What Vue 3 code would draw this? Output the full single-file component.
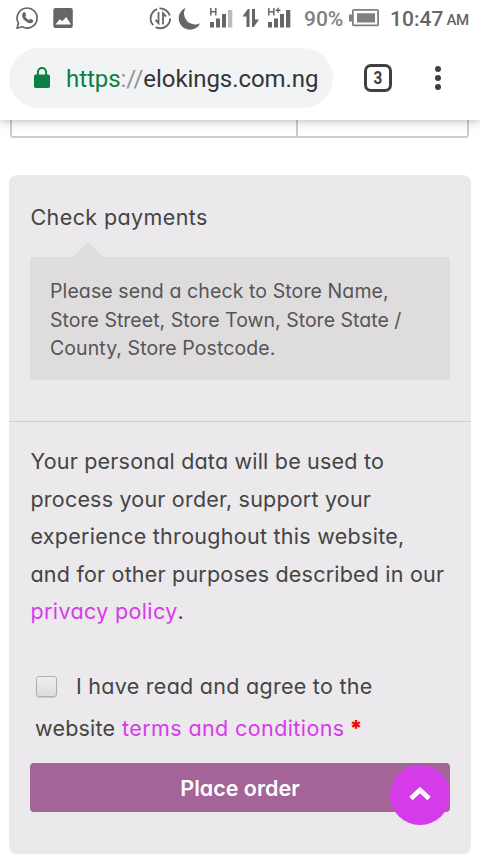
<script setup>
const notice = ['Please send a check to Store Name,', 'Store Street, Store Town, Store State /', 'County, Store Postcode.']
const privacy = ['Your personal data will be used to', 'process your order, support your', 'experience throughout this website,', 'and for other purposes described in our']
</script>

<template>
  <div class="screen">
    <header class="chrome">
      <div class="status">
        <svg class="status-icons" width="300" height="36" viewBox="0 0 300 36">
          <g fill="none" stroke="#666" stroke-width="1.7">
            <path d="M17 28.2l1.5-5.1a10 10 0 1 1 3.8 3.7z" stroke-linejoin="round" />
            <path d="M153.2 25.2a10 10 0 0 1 4-16.1M159.5 8.4a10 10 0 0 1 10.3 7.2M170.2 18.5a10 10 0 0 1-14.6 8.6" stroke-width="1.9" />
            <path d="M158.5 12v11.2l-3-3.4M163 24.5V13.2l3 3.5" stroke-width="1.8" />
          </g>
          <path d="M23.4 12.4c.7-.5 1.5-.3 1.8.4l.9 2c.2.5-.8 1.5-.8 1.8.6 1.5 2 2.8 3.8 3.5.5 0 1.1-1.4 1.6-1.3l2.2 1.1c.5.3.3 1.7-.2 2.3-2 2-5.3.8-7.800-1.600-2.500-2.300-4-6-1.500-8.200z" fill="#666" />
          <rect x="53.300" y="8" width="19.500" height="20" rx="2" fill="#666" />
          <path d="M55.500 24.500l4.300-5.200 2.400 2 4-4.300 4.800 7.500z" fill="#fff" />
          <path d="M185.500 8a11 11 0 0 0 14.700 15.200A11.300 11.300 0 1 1 185.500 8z" fill="#666" />
          <g fill="#666">
            <path d="M210 22h4v5.500h-4zM216 18.500h4v9h-4zM222 14h4v13.500h-4z" />
            <path d="M228 10h4.300v17.500H228z" fill="#bbb" />
            <path d="M268 22h4v5.500h-4zM274 18.500h4v9h-4zM280 14h4v13.500h-4zM286 10h4.300v17.500H286z" />
            <path d="M242.500 16.500l5.300-7.500h1.700v18h-3V16.500zM252 9h3v10.500h4l-5.200 7.500H252z" />
          </g>
          <path d="M210.800 8v7.500M215.800 8v7.500M210.800 11.700h5M268.800 8v7.500M273.800 8v7.500M268.800 11.700h5M275.500 10.200h5M278 7.700v5" stroke="#666" stroke-width="1.500" fill="none" />
        </svg>
        <span class="percent">90%</span>
        <svg class="battery" width="31" height="18" viewBox="0 0 31 18">
          <rect x="3.900" y=".9" width="25.200" height="15.500" rx="1" fill="none" stroke="#808080" stroke-width="1.800" />
          <path d="M0 5.500h3v7H0zM8 4.200h18v9.200H8z" fill="#808080" />
        </svg>
        <span class="time">10:47</span><span class="am">AM</span>
      </div>
      <div class="toolbar">
        <div class="address">
          <svg class="lock" width="16" height="22" viewBox="0 0 16 22">
            <path d="M3.900 8V5.200a4.100 4.100 0 0 1 8.200 0V8" fill="none" stroke="#0b8043" stroke-width="2" />
            <rect y="7.500" width="16" height="13.500" rx="1.700" fill="#0b8043" />
          </svg>
          <span class="url"><span class="secure">https</span><span class="slashes">://</span>elokings.com.ng</span>
        </div>
        <div class="tabs"><span>3</span></div>
        <div class="menu"><i /><i /><i /></div>
      </div>
    </header>

    <div class="table-end"><div class="cell first" /><div class="cell" /></div>

    <main class="card">
      <section class="payment">
        <div class="method"><span>Check payments</span></div>
        <div class="notice">
          <div v-for="(line, i) in notice" :key="i"><span :class="'n' + i">{{ line }}</span></div>
        </div>
      </section>
      <section class="confirm">
        <div class="privacy">
          <div v-for="(line, i) in privacy" :key="i"><span :class="'p' + i">{{ line }}</span></div>
          <div><a class="policy">privacy policy</a>.</div>
        </div>
        <div class="terms">
          <div class="agree"><span class="checkbox" /><span class="t0">I have read and agree to the</span></div>
          <div class="website"><span class="t1">website</span><a class="t2">terms and conditions</a><b>*</b></div>
        </div>
        <button class="order"><span>Place order</span>
          <div class="to-top">
            <svg width="24" height="16" viewBox="0 0 24 16"><path d="M3 12.500l9-8.500 9 8.500" fill="none" stroke="#fff" stroke-width="4.800" /></svg>
          </div>
        </button>
      </section>
    </main>
  </div>
</template>

<style>
body { margin: 0; background: #fff; }
</style>

<style scoped>
* { box-sizing: border-box; }
.screen { width: 480px; height: 854px; overflow: hidden; background: #fff; font-family: Inter, "Open Sans", sans-serif; font-feature-settings: "cv11"; font-weight: 400; color: #444; white-space: nowrap; }
.chrome { position: relative; height: 120px; background: #fff; box-shadow: 0 1px 9px rgba(0,0,0,.28); font-family: Roboto, sans-serif; font-weight: 400; font-feature-settings: normal; }
.status { display: flex; height: 36px; }
.status-icons { flex: none; }
.percent { width: 51px; padding-left: 4px; line-height: 38px; font-size: 21px; font-weight: 500; color: #808080; }
.battery { flex: none; margin-top: 9px; margin-left: -2px; }
.time { margin-left: 10px; line-height: 38px; font-size: 21px; font-weight: 500; color: #666; letter-spacing: .05px; }
.am { margin-left: 3px; line-height: 41px; font-size: 15px; font-weight: 500; color: #666; letter-spacing: -.4px; }
.toolbar { display: flex; align-items: center; padding: 12px 0 0 9px; }
.address { display: flex; align-items: center; width: 324px; height: 60px; padding-left: 25px; border-radius: 30px; background: #f1f3f4; }
.lock { flex: none; margin-top: -1px; }
.url { margin-left: 16px; font-size: 24px; line-height: 60px; color: #333638; padding-top: 2px; letter-spacing: -.06px; }
.secure { color: #0b8043; }
.slashes { color: #909294; }
.tabs { width: 28px; height: 28px; margin-left: 31px; border: 3px solid #3c4043; border-radius: 7px; text-align: center; font-size: 18px; line-height: 22px; font-weight: 700; color: #3c4043; }
.tabs span { display: block; transform: scaleX(.85); }
.menu { display: flex; flex-direction: column; gap: 3px; margin-left: 43px; }
.menu i { width: 6px; height: 6px; border-radius: 50%; background: #3c4043; }
.table-end { display: flex; width: 459px; height: 18px; margin-left: 10px; border: solid #ccc; border-width: 0 2px 2px; border-radius: 0 0 3px 3px; }
.cell { flex: 1; }
.cell.first { flex: none; width: 286px; border-right: 2px solid #ccc; }
.card { width: 462px; height: 679px; margin: 37px 0 0 9px; border-radius: 8px; background: #ebe9eb; }
.payment { height: 247px; padding: 23px 21px 0; border-bottom: 1.500px solid #d0ced0; }
.method { height: 38px; line-height: 38px; font-size: 21.500px; letter-spacing: .4px; padding-left: .5px; }
.notice { position: relative; width: 420px; height: 123px; margin-top: 21px; padding: 20px; border-radius: 3px; background: #dfdcde; font-size: 19.500px; line-height: 28.500px; color: #555; }
.notice::before { content: ""; position: absolute; left: 43px; top: -15px; border: 15.500px solid transparent; border-top: 0; border-bottom-color: #dfdcde; }
.n0 { letter-spacing: .1px; }
.n1 { letter-spacing: .02px; }
.n2 { letter-spacing: .08px; }
.confirm { padding: 20.500px 21px 0; font-size: 21.500px; }
.privacy { line-height: 37.500px; height: 187.500px; padding: .5px 0 0 .5px; }
.p0, .p1 { letter-spacing: .2px; }
.p2 { letter-spacing: .28px; }
.p3 { letter-spacing: .2px; }
.policy { letter-spacing: .36px; }
a { color: #d63bea; }
.terms { margin-top: 35px; line-height: 42px; height: 84px; }
.agree { display: flex; align-items: center; }
.checkbox { width: 21px; height: 21px; margin: 0 19px 0 6px; border: 1.500px solid #b0aeb0; border-radius: 3px; background: linear-gradient(#eee, #dcdcdc); box-shadow: 0 1px 1px rgba(0,0,0,.12); }
.t0 { letter-spacing: .27px; }
.website { display: flex; padding-left: 5px; }
.t1 { width: 87px; letter-spacing: .2px; }
.t2 { width: 227.500px; letter-spacing: .4px; }
b { font-weight: 900; color: red; }
.order { position: relative; display: block; width: 420px; height: 49px; margin: 14px 0 0; padding: 0; border: 0; border-radius: 4px; background: #a46497; color: #fff; font: 600 21.500px Inter, sans-serif; font-feature-settings: "cv11"; }
.to-top { position: absolute; right: 0; top: 2px; width: 60px; height: 60px; border-radius: 50%; background: #d63bea; display: flex; align-items: center; justify-content: center; padding-bottom: 3px; }
</style>
